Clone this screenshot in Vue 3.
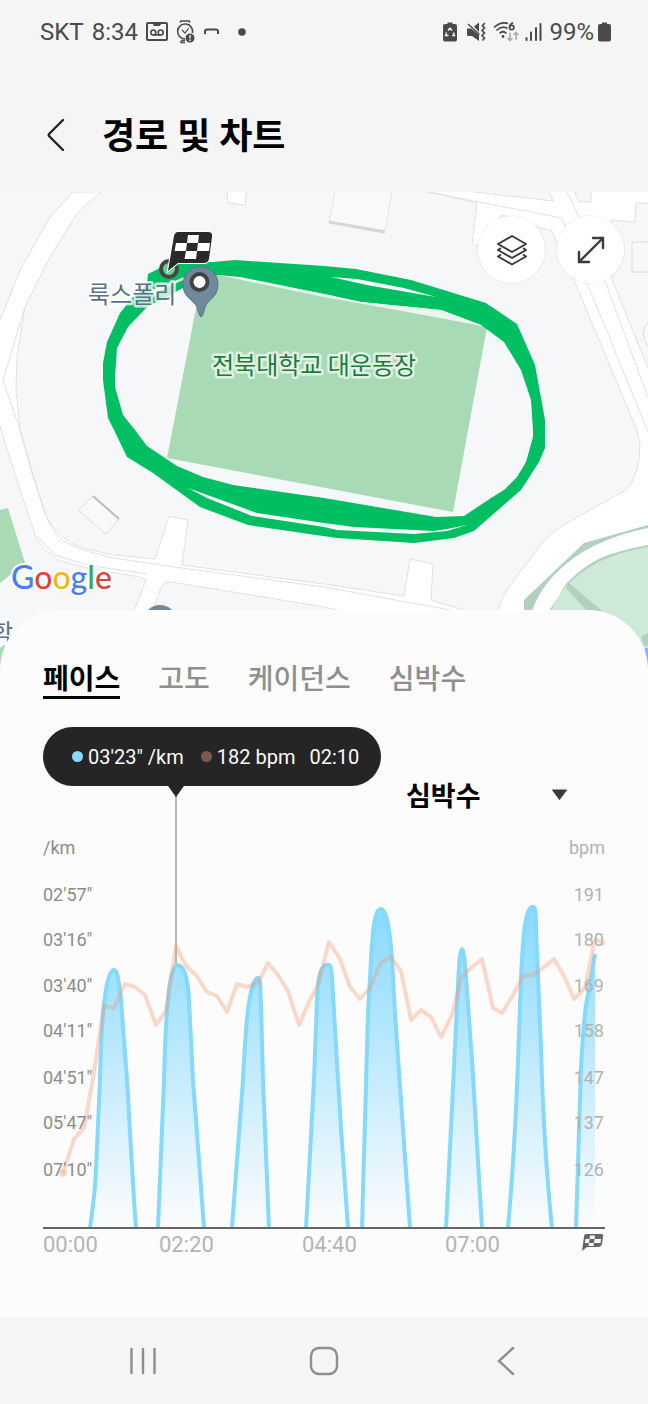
<template>
  <div class="screen">
    <div class="status-bar">
      <div class="status-left">
        <span>SKT</span>
        <span>8:34</span>
        <svg width="22" height="22" viewBox="0 0 22 22" aria-hidden="true">
          <rect x="1" y="2" width="20" height="17" rx="1" fill="none" stroke="#4a4a4a" stroke-width="2" />
          <path d="M7 1h8v2l-1 2H8L7 3z" fill="#4a4a4a" />
          <g fill="none" stroke="#4a4a4a" stroke-width="1.600">
            <circle cx="7.300" cy="11.500" r="2.500" />
            <circle cx="14.700" cy="11.500" r="2.500" />
            <path d="M7.300 14h7.400" />
          </g>
        </svg>
        <svg width="19" height="24" viewBox="0 0 19 24" aria-hidden="true">
          <g fill="none" stroke="#4a4a4a">
            <path d="M4 2.500 5 1h8l1 1.500M4.500 21 5 22.500h4M5 20.500h4" stroke-width="1.500" />
            <path d="M16.500 13A7.500 7.500 0 1 0 9 19" stroke-width="1.600" />
            <path d="m6 10 3 3 4-5" stroke-width="1.200" />
          </g>
          <circle cx="14" cy="18" r="4.500" fill="#4a4a4a" />
          <path d="M14 15v3.500M14 19.500v1.500" stroke="#f5f5f5" stroke-width="1.400" />
        </svg>
        <svg width="17" height="10" viewBox="0 0 17 10" aria-hidden="true">
          <path d="M2 7V4.500Q2 2.500 4 2.500h9q2 0 2 2V7" fill="none" stroke="#4a4a4a" stroke-width="2" />
        </svg>
        <svg width="22" height="10" viewBox="0 0 22 10" aria-hidden="true">
          <circle cx="14" cy="5" r="3.800" fill="#4a4a4a" />
        </svg>
      </div>
      <div class="status-right">
        <svg width="18" height="20" viewBox="0 0 18 20" aria-hidden="true">
          <path d="M4.500 2V.5h5V2H12q2 0 2 2v13.500q0 2-2 2H2q-2 0-2-2V4q0-2 2-2z" fill="#4a4a4a" />
          <path
            d="m5 8.500 2-2.500 2 2.500M10.500 10.500l1 3H9M5.500 13.500h-3l1-3"
            fill="none"
            stroke="#f5f5f5"
            stroke-width="1.300"
          />
        </svg>
        <svg width="24" height="20" viewBox="0 0 24 20" aria-hidden="true">
          <path d="M2 6.500h4l8 6.500v6l-7-5H3.500Q2 14 2 12.500zM9 4.500l5-4V10z" fill="#4a4a4a" />
          <path d="m3 2 11.500 10.500" stroke="#4a4a4a" stroke-width="1.500" />
          <path
            d="m20 1-2.500 2.500L19.500 6l-2.500 2.500 2.500 2.500-2.500 2.500 2.500 2.500-2 2.500"
            fill="none"
            stroke="#4a4a4a"
            stroke-width="1.700"
          />
        </svg>
        <svg width="28" height="20" viewBox="0 0 28 20" aria-hidden="true">
          <g fill="none" stroke="#4a4a4a" stroke-width="1.700">
            <path d="M1 5.500Q8-1 15 1.500M3.500 8.500Q9 3 14.500 6.500M6.500 11.500Q10 8 13.500 11.500" />
            <path d="M20 .5q-3.500 2-3.500 5" />
            <circle cx="18.700" cy="5.500" r="2.200" />
          </g>
          <circle cx="10" cy="14.500" r="1.400" fill="#4a4a4a" />
          <path
            d="M17 10.500v8M14.500 16l2.500 2.500 2.500-2.500M23 18v-7.500M20.500 13l2.500-2.500 2.500 2.500"
            fill="none"
            stroke="#b0b0b0"
            stroke-width="1.700"
          />
        </svg>
        <svg width="20" height="20" viewBox="0 0 20 20" aria-hidden="true">
          <path
            d="M1.500 16v2M6 10.500V18M11 6v12M15.500 2v16"
            stroke="#4a4a4a"
            stroke-width="2"
            stroke-linecap="round"
          />
        </svg>
        <span>99%</span>
        <svg width="13" height="20" viewBox="0 0 13 20" aria-hidden="true">
          <path d="M4 2V.5h5V2h2q2 0 2 2v13.500q0 2-2 2H2q-2 0-2-2V4q0-2 2-2z" fill="#4a4a4a" />
        </svg>
      </div>
    </div>

    <header class="header">
      <button class="icon-button" aria-label="뒤로">
        <svg width="20" height="36" viewBox="0 0 20 36">
          <path
            d="M18 3 4.500 16.500q-1.500 1.500 0 3L18 33"
            fill="none"
            stroke="#222"
            stroke-width="2.400"
            stroke-linecap="round"
          />
        </svg>
      </button>
      <h1 class="title">경로 및 차트</h1>
    </header>

    <section class="map">
      <svg class="map-canvas" viewBox="0 192 648 478" preserveAspectRatio="xMidYMin slice">
        <rect y="192" width="648" height="478" fill="#f5f7f9" />

        <!-- roads -->
        <g fill="#fff" stroke="#dfe1e3" stroke-width="1">
          <path
            d="M73 192 50 217 20 270 7 303-2 325V420L20 490 37 540 45 550 58 560 87 568 140 577 146 580 134 611H153L160 590Q164 580 172 582L324 607 340 611H467L431 600 433 564 410 559 404 596 324 584 182 565 188 520 169 516 155 559 113 555 83 548Q60 540 47 518L33 477 20 430 16 390 17 357 25 307 50 257 78 212 101 192z"
          />
          <path
            d="M427 191H650V203H636L635 222 611 220 611 277 650 373V670H498V610Q500 600 514 580L542 543Q550 532 577 517L626 490Q640 475 640 443L636 428 574 280 557 243 552 231 537 227 502 215 477 247 472 243 477 203z"
          />
          <path d="M227 191h20l-2 14-17-2z" />
          <path d="M466 191 553 201 549 191zM574 191 579 202H591V191z" fill="#f5f7f9" />
          <path
            d="M25 307 3 380 20 430 43 508Q50 530 63 541L83 550 113 558 182 568 324 587 467 613M37 536 55 555 87 565 147 574M427 192 562 218 588 285 648 432M567 192 588 235 648 397"
            fill="none"
          />
        </g>
        <path d="M632 242H650V272H632zM650 320Q636 334 650 348z" fill="#f8f8f8" stroke="#dcdcdc" stroke-width="1" />

        <!-- buildings -->
        <path d="M335 191H392L385 231 329 222z" fill="#f9f9f9" stroke="#e3e3e3" stroke-width="1" />
        <path d="m329 222 56 10" stroke="#d6d6d6" stroke-width="3" />
        <path d="M93 496 119 519 106 534 78 510z" fill="#f9f9f9" stroke="#dcdcdc" stroke-width="1" />
        <path d="m93 496 26 23" stroke="#bbb" stroke-width="2" />

        <!-- parks -->
        <path d="M0 510 8 508 25 563 0 583zM0 648l6-4v26H0z" fill="#a8dab5" />
        <path d="M549 611 567 583Q585 565 601 558T648 545V670H549z" fill="#cee9d7" />
        <path
          d="M524 611V600L584 543 648 525V528Q600 538 571 560T532 611zM549 611 567 583Q585 565 601 558T648 545V547Q610 553 585 570T551 611zM569 583 602 611H587L566 588zM641 637 648 633V646H644z"
          fill="#b3d0bf"
        />
        <path d="M645 648h3v20h-3z" fill="#8ab4f8" />

        <!-- sports field -->
        <path d="M203 272 487 327 453 512 167 458z" fill="#a8dab5" />

        <!-- running route -->
        <path
          fill="#00bf63"
          fill-rule="evenodd"
          d="M148 274 160 268 180 263 213 262 235 260 324 266 356 269 411 280 486 303 517 324 535 365 542 403 545 420V448L539 462 521 490 474 531 454 538 414 543 337 538 248 525 200 507 153 473 127 457 114 430 108 418 103 380V363L107 342 120 313 133 297 147 285zM150 291 147 307 128 327 117 348 115 377V387L123 415 135 430 147 446 177 466 203 477 233 485 324 498 436 517 464 516 491 498 504 490 517 477 526 462 533 437V430L531 400 521 370 504 342 481 325 441 310 361 302 324 294 240 277 218 275 187 276zM188 488 207 498 252 516 324 527 337 530 414 534 447 531 467 525 447 529 434 531 354 527 324 523 257 513zM331 277 357 279 404 288 436 297 407 292 367 285z"
        />
        <path d="M147 307 183 288V280L158 291 141 300 128 318z" fill="#00bf63" />
        <path d="M218 275 324 294 361 302 441 310 481 325 324 297z" fill="#eaf6ee" />

        <!-- place pin and map labels -->
        <circle cx="160" cy="622" r="17" fill="#71899c" />
        <text class="place" x="88" y="303">룩스폴리</text>
        <text class="place" x="-9" y="641">학</text>
        <text class="place park" x="212" y="374">전북대학교 대운동장</text>
        <path
          d="M201 317Q199 316 197 307C193 299 183 298 183 284A17.500 17.500 0 0 1 218 284C218 298 208 299 205 307Q203 316 201 317z"
          fill="#71899c"
          stroke="#5b7386"
          stroke-width="1"
        />
        <circle cx="199.500" cy="282" r="8" fill="#fff" stroke="#434343" stroke-width="4" />

        <!-- finish flag -->
        <circle cx="169" cy="269" r="8" fill="#5fd497" stroke="#454545" stroke-width="4" />
        <path
          d="M178 232H208Q213 232 212 237L209 259Q208 263 204 263H178L168 271 174 236Q175 232 178 232z"
          fill="#2a2a2a"
          stroke="#fff"
          stroke-width="2"
          paint-order="stroke"
        />
        <path
          d="M188 235H199L198 243H187zM176 243H187L186 251H174.500zM198 243H210L209 251H197zM186 251H197L196 259H184.500z"
          fill="#fff"
        />

        <text class="google" x="11" y="589">
          <tspan fill="#4a80e8">G</tspan><tspan fill="#d8473a">o</tspan><tspan fill="#f0b71c">o</tspan><tspan fill="#4a80e8">g</tspan><tspan fill="#3fa558">l</tspan><tspan fill="#d8473a">e</tspan>
        </text>
      </svg>

      <div class="map-actions">
        <button class="map-button" aria-label="지도 유형">
          <svg width="32" height="32" viewBox="0 0 32 32">
            <path
              d="M16 2 30 10 16 18 2 10zM5 14 2 16 16 24 30 16 27 14M5 20.500 2 22.500 16 30.500 30 22.500 27 20.500"
              fill="none"
              stroke="#3c3c3c"
              stroke-width="2"
              stroke-linejoin="round"
            />
          </svg>
        </button>
        <button class="map-button" aria-label="전체 화면">
          <svg width="32" height="32" viewBox="0 0 32 32">
            <path
              d="M4 28 28 4M18 4H28V14M4 18V28H14"
              fill="none"
              stroke="#3c3c3c"
              stroke-width="2.400"
              stroke-linecap="round"
            />
          </svg>
        </button>
      </div>
    </section>

    <main class="sheet">
      <div class="tabs" role="tablist">
        <button
          v-for="tab in tabs"
          :key="tab"
          class="tab"
          :class="{ active: tab === activeTab }"
          role="tab"
          :aria-selected="tab === activeTab"
          @click="activeTab = tab"
        >
          {{ tab }}
        </button>
      </div>

      <div class="chart-head">
        <div class="tooltip">
          <span class="dot pace"></span>
          <span class="pace-value">03'23" /km</span>
          <span class="dot heart"></span>
          <span class="heart-value">182 bpm</span>
          <span>02:10</span>
        </div>
        <div class="metric">
          <select v-model="metric" aria-label="비교 항목">
            <option v-for="name in metrics" :key="name">{{ name }}</option>
          </select>
          <svg width="17" height="12" viewBox="0 0 17 12" aria-hidden="true">
            <path d="M1.500 1h14l-7 9.500z" fill="#3a3a3a" stroke="#3a3a3a" stroke-linejoin="round" />
          </svg>
        </div>
      </div>

      <svg class="chart" viewBox="43 815 562 445" role="img" aria-label="페이스 및 심박수 차트">
        <defs>
          <linearGradient id="pace-fill" gradientUnits="userSpaceOnUse" x1="0" y1="906" x2="0" y2="1228">
            <stop offset="0" stop-color="#86daff" />
            <stop offset="1" stop-color="#86daff" stop-opacity="0" />
          </linearGradient>
        </defs>

        <path d="M176 796V966" stroke="#b9b9b9" stroke-width="2" />

        <g v-for="peak in peaks" :key="peak">
          <path :d="peak" fill="url(#pace-fill)" />
          <path :d="peak" class="pace-line" />
        </g>
        <path d="M576 1228 581 1067Q584 1010 588 995L595 954V1228z" fill="url(#pace-fill)" />
        <path d="M576 1228 581 1067Q584 1010 588 995L595 954" class="pace-line" />

        <circle cx="63" cy="1173" r="4" fill="#f4966e" fill-opacity="0.35" />
        <polyline :points="heartPoints" class="heart-line" />
        <path d="M43 1228H605" stroke="#666" stroke-width="2" />

        <text class="unit left" x="43" y="854">/km</text>
        <text class="unit right" x="605" y="854">bpm</text>
        <g v-for="row in rows" :key="row.y">
          <text class="unit left" x="43" :y="row.y">{{ row.pace }}</text>
          <text class="unit right" x="604" :y="row.y">{{ row.bpm }}</text>
        </g>

        <text v-for="t in times" :key="t.label" class="time" :x="t.x" y="1252">{{ t.label }}</text>
        <path d="M586 1234H601Q604 1234 603 1237L602 1244Q601 1247 598 1247H587L582 1251 584 1237Q584 1234 586 1234z" fill="#666" />
        <path
          d="M590 1235.500H595L594.500 1239H589.500zM585.500 1239H589.500L589 1243H585zM594.500 1239H601L600.500 1243H594zM589 1243H594L593.500 1246H588.500z"
          fill="#fcfcfc"
        />
      </svg>
    </main>

    <nav class="nav-bar">
      <button class="icon-button" aria-label="최근 앱">
        <svg width="28" height="30" viewBox="0 0 28 30">
          <path d="M2.500 3v24M14 3v24M25.500 3v24" stroke="#8e8e8e" stroke-width="2.400" stroke-linecap="round" />
        </svg>
      </button>
      <button class="icon-button" aria-label="홈">
        <svg width="30" height="30" viewBox="0 0 30 30">
          <rect x="2" y="2" width="26" height="26" rx="8" fill="none" stroke="#8e8e8e" stroke-width="2.400" />
        </svg>
      </button>
      <button class="icon-button" aria-label="이전">
        <svg width="20" height="30" viewBox="0 0 20 30">
          <path d="M18 2 4 15 18 28" fill="none" stroke="#8e8e8e" stroke-width="2.400" stroke-linecap="round" />
        </svg>
      </button>
    </nav>
  </div>
</template>

<script setup>
import { ref, computed } from 'vue'

const tabs = ['페이스', '고도', '케이던스', '심박수']
const activeTab = ref('페이스')

const metrics = ['심박수', '고도', '케이던스']
const metric = ref('심박수')

const rows = [
  { y: 901, pace: '02\'57"', bpm: 191 },
  { y: 946, pace: '03\'16"', bpm: 180 },
  { y: 992, pace: '03\'40"', bpm: 169 },
  { y: 1037, pace: '04\'11"', bpm: 158 },
  { y: 1084, pace: '04\'51"', bpm: 147 },
  { y: 1129, pace: '05\'47"', bpm: 137 },
  { y: 1176, pace: '07\'10"', bpm: 126 }
]

const times = [
  { x: 43, label: '00:00' },
  { x: 159, label: '02:20' },
  { x: 302, label: '04:40' },
  { x: 445, label: '07:00' }
]

const peaks = [
  'M90 1228C93 1205 95 1195 96 1170L100 1080C101 1040 102 1015 105 997C107 980 110 971 114 970C118 970 119 985 121 1000L127 1080C130 1130 133 1190 136 1228',
  'M158 1228 164 1080C165 1040 166 1020 168 1000C170 975 174 965 178 965C184 966 188 980 189 1000L193 1080 204 1228',
  'M232 1228 243 1080C245 1040 247 1015 249 1003C252 985 254 979 258 978C261 978 260 990 261 1003L263 1080C265 1140 267 1190 269 1228',
  'M306 1228 314 1080 317 1000C318 975 321 965 327 965C331 964 331 967 332 977L338 1080C341 1130 345 1190 348 1228',
  'M362 1228 368 1013 371 960C373 925 375 909 381 909C387 910 390 930 392 960L395 1013 400 1087 410 1228',
  'M446 1228 453 1087 458 985C459 965 460 949 462 949C464 949 465 965 466 977L472 1060 482 1228',
  'M508 1228Q514 1160 517 1087L521 980C523 930 526 908 532 907C535 906 536 908 536 930L541 1047C543 1120 546 1170 552 1228'
]

const heartRate = [
  [63, 1173], [74, 1139], [84, 1128], [93, 1078], [104, 1006], [114, 1008], [125, 984], [135, 987],
  [145, 995], [156, 1025], [166, 1011], [176, 946], [186, 966], [196, 975], [207, 992], [217, 996],
  [227, 1012], [237, 984], [247, 987], [258, 983], [268, 963], [278, 975], [288, 991], [299, 1025],
  [309, 1002], [318, 985], [329, 942], [340, 959], [350, 987], [360, 999], [370, 988], [380, 964],
  [390, 956], [401, 971], [411, 1020], [421, 1010], [431, 1017], [441, 1037], [452, 1015], [462, 976],
  [472, 967], [482, 959], [493, 1008], [502, 1013], [513, 995], [523, 976], [533, 975], [543, 968],
  [554, 959], [564, 976], [574, 999], [585, 988], [595, 939], [605, 944]
]

const heartPoints = computed(() => heartRate.map((point) => point.join(',')).join(' '))
</script>

<style>
body {
  margin: 0;
  background-color: #f5f5f5;
}
</style>

<style scoped>
.screen {
  display: flex;
  flex-direction: column;
  font-family: Roboto, "Noto Sans CJK KR", sans-serif;
  background-color: #f5f5f5;
}

svg {
  display: block;
  flex-shrink: 0;
}

button {
  padding: 0;
  border: none;
  background: none;
  font-family: inherit;
  cursor: pointer;
}

/* Status bar */
.status-bar {
  display: flex;
  justify-content: space-between;
  padding: 16px 37px 30px 40px;
  font-size: 24px;
  line-height: 32px;
  color: #4a4a4a;
}

.status-left,
.status-right {
  display: flex;
  align-items: center;
}

.status-left {
  gap: 8px;
}

.status-right {
  gap: 4px;
}

/* Header */
.header {
  display: flex;
  align-items: center;
  gap: 37px;
  height: 114px;
  padding: 0 45px;
}

.icon-button {
  display: flex;
  align-items: center;
  justify-content: center;
}

.title {
  margin: 0;
  padding-top: 4px;
  font-size: 36px;
  font-weight: 700;
  line-height: 48px;
  color: #000;
}

/* Map */
.map {
  position: relative;
}

.map-canvas {
  width: 100%;
  height: 478px;
}

.place {
  font-family: "Noto Sans CJK KR", sans-serif;
  font-size: 24px;
  fill: #5b7186;
  stroke: rgba(255, 255, 255, 0.75);
  stroke-width: 5px;
  stroke-linejoin: round;
  paint-order: stroke;
}

.park {
  fill: #1d7a3b;
  stroke: #dff2e4;
}

.google {
  font-family: Lato, sans-serif;
  font-size: 32px;
  font-weight: 500;
  stroke: #fff;
  stroke-width: 4px;
  stroke-linejoin: round;
  paint-order: stroke;
}

.map-actions {
  position: absolute;
  top: 24px;
  right: 24px;
  display: flex;
  gap: 12px;
}

.map-button {
  display: flex;
  align-items: center;
  justify-content: center;
  width: 67px;
  height: 67px;
  border-radius: 50%;
  background-color: #fff;
  box-shadow: 0 0 1px 1px rgba(0, 0, 0, 0.05);
}

/* Bottom sheet */
.sheet {
  position: relative;
  margin-top: -60px;
  padding: 54px 43px 57px;
  border-radius: 60px 60px 0 0;
  background-color: #fcfcfc;
}

.tabs {
  display: flex;
  gap: 38px;
}

.tab {
  border-bottom: 3px solid transparent;
  font-size: 28px;
  font-weight: 500;
  line-height: 32px;
  color: #8f8f8f;
}

.tab.active {
  border-color: #000;
  font-weight: 700;
  color: #000;
}

.chart-head {
  display: flex;
  align-items: flex-start;
  justify-content: space-between;
  height: 88px;
  margin-top: 28px;
}

.tooltip {
  position: relative;
  z-index: 1;
  display: flex;
  align-items: center;
  height: 59px;
  padding: 0 22px 0 29px;
  border-radius: 30px;
  background-color: #252525;
  font-size: 20px;
  line-height: 28px;
  white-space: nowrap;
  color: #fafafa;
}

.tooltip::after {
  content: "";
  position: absolute;
  top: 100%;
  left: 125px;
  border: 8px solid transparent;
  border-top: 11px solid #252525;
  border-bottom: none;
}

.dot {
  width: 11px;
  height: 11px;
  margin-right: 5px;
  border-radius: 50%;
}

.dot.pace {
  background-color: #86daff;
}

.dot.heart {
  background-color: #7b5a4a;
}

.pace-value {
  margin-right: 17px;
}

.heart-value {
  margin-right: 14px;
}

.metric {
  display: grid;
  align-items: center;
  width: 162px;
  margin: 48px 37px 0 0;
}

.metric select,
.metric svg {
  grid-area: 1 / 1;
}

.metric svg {
  justify-self: end;
  pointer-events: none;
}

.metric select {
  appearance: none;
  height: 40px;
  padding: 4px 0 0;
  border: none;
  background: none;
  font-family: inherit;
  font-size: 27px;
  font-weight: 700;
  color: #000;
}

/* Chart */
.chart {
  width: 100%;
  overflow: visible;
}

.unit {
  font-size: 18px;
}

.left {
  fill: #8c8c8c;
}

.right {
  fill: #b2b2b2;
  text-anchor: end;
}

.time {
  font-size: 22px;
  fill: #b4b4b4;
}

.pace-line {
  fill: none;
  stroke: #86d9fb;
  stroke-width: 4;
}

.heart-line {
  fill: none;
  stroke: #f4966e;
  stroke-opacity: 0.35;
  stroke-width: 4;
  stroke-linejoin: round;
}

/* Navigation bar */
.nav-bar {
  display: grid;
  grid-template-columns: repeat(3, 1fr);
  height: 87px;
  padding: 0 52px;
  background-color: #f5f5f5;
}
</style>
